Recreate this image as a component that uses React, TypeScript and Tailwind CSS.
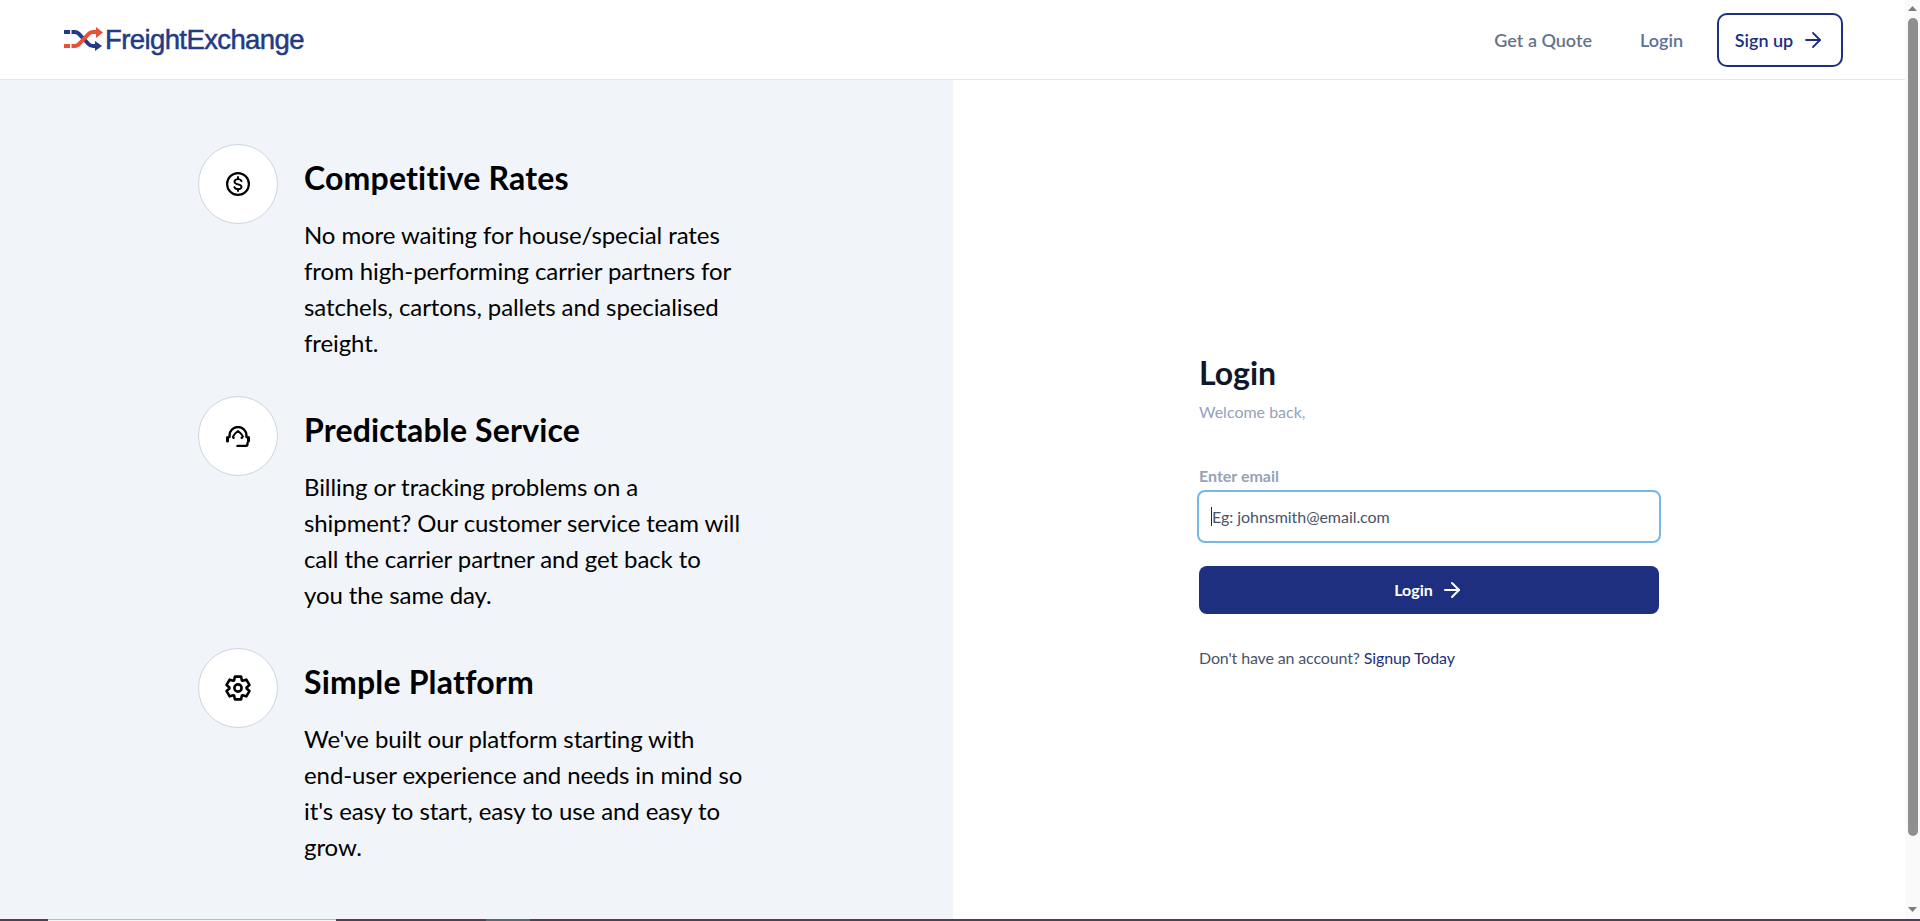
import { ArrowRight, type LucideProps } from "lucide-react";

const gearPath = (() => {
  const c = 13;
  const pts: string[] = [];
  const p = (r: number, deg: number) => {
    const a = ((deg - 90) * Math.PI) / 180;
    return `${(c + r * Math.cos(a)).toFixed(2)} ${(c + r * Math.sin(a)).toFixed(2)}`;
  };
  for (let i = 0; i < 6; i++) {
    const m = i * 60;
    pts.push(p(8.6, m - 27), p(11.8, m - 15), p(11.8, m + 15), p(8.6, m + 27));
  }
  return `M${pts.join("L")}Z`;
})();

function Gear() {
  return (
    <svg width="26" height="26" viewBox="0 0 26 26" fill="none" stroke="currentColor" strokeWidth="2.600" strokeLinejoin="round">
      <path d={gearPath} />
      <circle cx="13" cy="13" r="3.600" />
    </svg>
  );
}

function Dollar() {
  return (
    <svg width="24" height="24" viewBox="0 0 24 24" fill="none" stroke="currentColor" strokeWidth="2.200" strokeLinecap="round">
      <circle cx="12" cy="12" r="10.900" />
      <path d="M15.500 9.200c-.5-1.300-1.800-2.100-3.500-2.100-2 0-3.500 1.100-3.500 2.600 0 3.600 7 1.800 7 5 0 1.500-1.500 2.500-3.500 2.500-1.800 0-3.100-.8-3.600-2.100" strokeWidth="1.900" />
      <path d="M12 5v2M12 17v2" strokeWidth="1.900" />
    </svg>
  );
}

function Headset() {
  return (
    <svg width="24" height="21" viewBox="0 0 24 21" fill="none" stroke="currentColor" strokeWidth="2.400" strokeLinecap="round" strokeLinejoin="round">
      <path d="M3.500 11V9.500a8.500 8.500 0 0 1 17 0V11" />
      <path d="M7 10.500C8 8 10 6.500 12 5c2 1.500 4 3 5 5.500" strokeWidth="2" />
      <path d="M7.500 11.800h.01M15.800 11.800h.01" strokeWidth="2.600" />
      <path d="M1.500 11.500v3.500M22.500 11.500v3.500" strokeWidth="3" />
      <path d="M21.500 17v1c0 1.200-.8 2-2 2H11.500" />
    </svg>
  );
}

function Logo() {
  return (
    <div className="flex items-center">
      <svg width="39" height="25" viewBox="0 0 39 25" fill="none" className="shrink-0">
        <path d="M0 5h6M7.500 5h3c2.500 0 4 1 5.500 3l8.500 9c1.200 1.400 2.500 2 4.500 2H32" stroke="#233a84" strokeWidth="4" />
        <path d="M0 19h6M7.500 19h3c2.500 0 4-1 5.500-3l8.500-9c1.200-1.400 2.500-2 4.500-2H33" stroke="#e8503a" strokeWidth="4" />
        <path d="M32 0l7 5.500-7 5.500z" fill="#e8503a" />
        <path d="M31 14l7 5-7 5z" fill="#233a84" />
      </svg>
      <span className="font-['Liberation_Sans',sans-serif] text-[27.500px] leading-none text-[#233a84] tracking-[-0.6px] ml-[2px] [-webkit-text-stroke:0.5px_#233a84]">FreightExchange</span>
    </div>
  );
}

function Arrow(props: LucideProps) {
  return <ArrowRight size={24} strokeWidth={1.800} {...props} />;
}

function Feature({ icon, title, lines }: { icon: React.ReactNode; title: string; lines: string[] }) {
  return (
    <div className="flex gap-[26px] h-[252px]">
      <div className="w-[80px] h-[80px] rounded-full bg-white border border-[#cbd5e1] flex items-center justify-center text-black shrink-0">
        {icon}
      </div>
      <div className="pt-[14px]">
        <h2 className="text-[32px] leading-[40px] font-bold tracking-[0.18px] text-black">{title}</h2>
        <p className="mt-[19px] text-[24px] leading-[36px] tracking-[-0.09px] text-black">
          {lines.map((l) => (
            <span key={l} className="block whitespace-nowrap">{l}</span>
          ))}
        </p>
      </div>
    </div>
  );
}

export default function App() {
  return (
    <div className="h-[921px] w-full flex flex-col overflow-hidden bg-white font-['Lato',sans-serif] [font-variant-ligatures:none]">
      <div className="flex flex-1 min-h-0">
        <div className="flex-1 min-w-0 flex flex-col">
          <header className="h-[80px] shrink-0 border-b border-[#e2e8f0] flex items-center justify-between pl-[64px] pr-[62px]">
            <Logo />
            <nav className="flex items-center">
              <a className="pt-[2px] text-[18px] font-semibold text-[#64748b]">Get a Quote</a>
              <a className="pt-[2px] ml-[48px] text-[18px] font-semibold text-[#5a7199]">Login</a>
              <a className="ml-[34px] h-[54px] w-[126px] rounded-[10px] border-2 border-[#1e2f80] flex items-center justify-center gap-[8px] text-[18px] font-semibold text-[#1e2f80]">
                <span className="pt-[2px]">Sign up</span> <Arrow />
              </a>
            </nav>
          </header>
          <div className="flex flex-1 min-h-0">
            <section className="w-[953px] shrink-0 bg-[#f1f5f9] pl-[198px] pt-[64px]">
              <Feature
                icon={<Dollar />}
                title="Competitive Rates"
                lines={["No more waiting for house/special rates", "from high-performing carrier partners for", "satchels, cartons, pallets and specialised", "freight."]}
              />
              <Feature
                icon={<Headset />}
                title="Predictable Service"
                lines={["Billing or tracking problems on a", "shipment? Our customer service team will", "call the carrier partner and get back to", "you the same day."]}
              />
              <Feature
                icon={<Gear />}
                title="Simple Platform"
                lines={["We've built our platform starting with", "end-user experience and needs in mind so", "it's easy to start, easy to use and easy to", "grow."]}
              />
            </section>
            <section className="flex-1 pl-[246px] pt-[271px]">
              <div className="w-[460px]">
                <h1 className="text-[32px] leading-[44px] font-bold text-[#0f172a]">Login</h1>
                <p className="mt-[5px] text-[16px] leading-[24px] text-[#94a3b8]">Welcome back,</p>
                <label className="block mt-[40px] text-[16px] leading-[24px] font-bold text-[#94a3b8]">Enter email</label>
                <div className="mt-[2px] -mx-[2px] h-[53px] rounded-[8px] border-2 border-[#76b7e8] flex items-center pl-[12px] text-[16px] tracking-[-0.05px] text-[#475569]">
                  <span className="inline-block w-[1px] h-[19px] bg-[#1e293b]" />
                  <span>Eg: johnsmith@email.com</span>
                </div>
                <button className="mt-[23px] w-full h-[48px] rounded-[8px] bg-[#1e2f80] text-white text-[16px] font-bold flex items-center justify-center gap-[7px]">
                  Login <Arrow strokeWidth={2} />
                </button>
                <p className="mt-[32px] text-[16px] leading-[24px] tracking-[-0.14px] text-[#475569]">
                  Don't have an account? <a className="text-[#1e2f80]">Signup Today</a>
                </p>
              </div>
            </section>
          </div>
        </div>
        <div className="w-[15px] shrink-0 bg-[#fafafa] flex flex-col items-center">
          <svg width="9" height="5" viewBox="0 0 9 5" className="mt-[6px] shrink-0"><path d="M4.500 0L9 5H0z" fill="#7d7d7d" /></svg>
          <div className="mt-[7px] w-[10px] h-[818px] rounded-[5px] bg-[#8f8f8f]" />
          <svg width="9" height="5" viewBox="0 0 9 5" className="mt-auto mb-[7px] shrink-0"><path d="M4.500 5L9 0H0z" fill="#7d7d7d" /></svg>
        </div>
      </div>
      <div className="h-[2px] shrink-0 bg-[#4f3f55] flex">
        <div className="ml-[48px] w-[288px] bg-[#f4f4f4] border-t border-[#bdbdbd]" />
        <div className="ml-[150px] w-[44px] bg-[#5f6675]" />
      </div>
    </div>
  );
}
